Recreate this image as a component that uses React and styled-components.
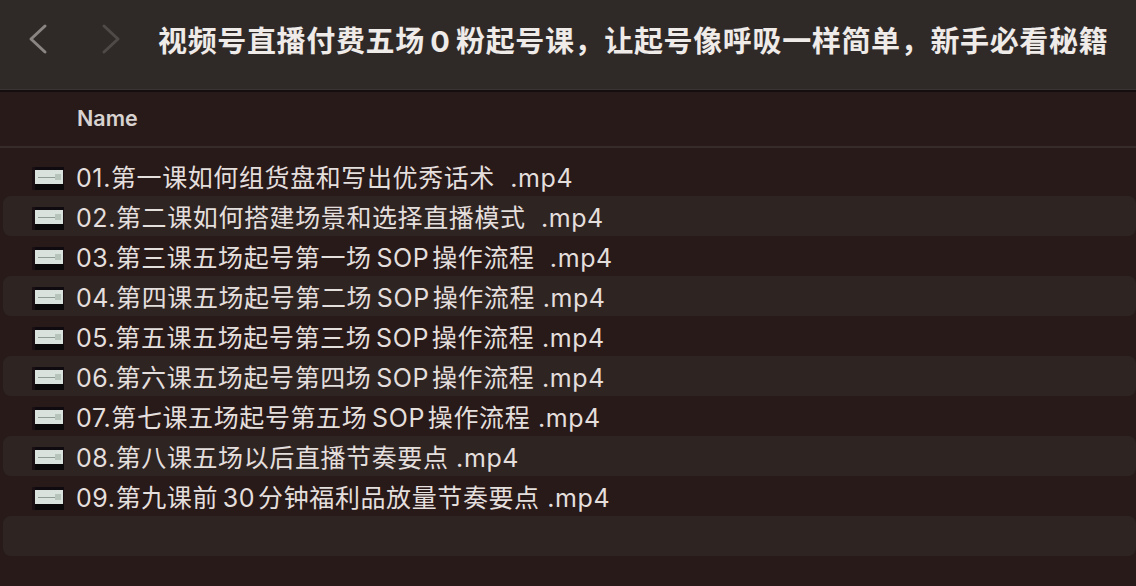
import React from 'react'
import styled, { createGlobalStyle } from 'styled-components'

const GlobalStyle = createGlobalStyle`
  html, body {
    margin: 0;
    padding: 0;
    background: #271a19;
    overflow: hidden;
  }
`

const Window = styled.div`
  width: 1136px;
  height: 586px;
  display: flex;
  flex-direction: column;
  background: #271a19;
  font-family: Inter, "Noto Sans CJK SC", sans-serif;
  overflow: hidden;
`

const Toolbar = styled.div`
  height: 90px;
  flex: none;
  box-sizing: border-box;
  display: flex;
  align-items: center;
  padding: 0 0 12px 28px;
  background: #2f2a28;
  border-bottom: 1px solid #3a3432;
  box-shadow: 0 1px 0 #140f0e, 0 2px 0 #140f0e;
  white-space: nowrap;
`

const NavButton = styled.svg`
  width: 20px;
  height: 32px;
  flex: none;
  margin-right: ${(p) => p.$gap}px;
  fill: none;
  stroke: ${(p) => p.$color};
  stroke-width: 3;
  stroke-linecap: round;
  stroke-linejoin: round;
`

const Title = styled.div`
  font-size: 29px;
  font-weight: 700;
  color: #efebe9;
  letter-spacing: 0.65px;
`

const HeaderRow = styled.div`
  height: 56px;
  flex: none;
  display: flex;
  align-items: center;
  padding: 0 0 2px 77px;
  box-sizing: border-box;
  margin-top: 2px;
  border-bottom: 2px solid #382c2a;
  font-size: 21.5px;
  font-weight: 600;
  color: #d8d2d0;
`

const List = styled.div`
  display: flex;
  flex-direction: column;
  padding-top: 8px;
`

const Row = styled.div`
  height: 40px;
  display: flex;
  align-items: center;
  margin-left: 3px;
  padding-left: 29px;
  box-sizing: border-box;
  border-radius: 8px;
  background: ${(p) => (p.$striped ? '#2e2523' : 'transparent')};
`

const FileName = styled.span`
  margin-left: 12px;
  font-size: 25px;
  letter-spacing: 0.6px;
  color: #e4dfdd;
  white-space: pre;
`

const Thumb = styled.svg`
  width: 32px;
  height: 23px;
  flex: none;
  margin-top: 4px;
`

const VideoIcon = () => (
  <Thumb viewBox="0 0 32 23">
    <rect width="32" height="23" fill="#1a1013" />
    <rect x="3" y="0" width="29" height="3" fill="#0e0a10" />
    <rect x="3" y="17" width="29" height="6" fill="#0b0809" />
    <rect x="3" y="3" width="28" height="14" fill="#d9e2dc" />
    <rect x="6" y="10" width="20" height="1" fill="#8f9c95" />
    <rect x="23" y="7" width="6" height="6" fill="#b6c4bc" />
  </Thumb>
)

const files = [
  '01.第一课如何组货盘和写出优秀话术  .mp4',
  '02.第二课如何搭建场景和选择直播模式  .mp4',
  '03.第三课五场起号第一场\u2006SOP\u200a操作流程  .mp4',
  '04.第四课五场起号第二场\u2006SOP\u200a操作流程 .mp4',
  '05.第五课五场起号第三场\u2006SOP\u200a操作流程 .mp4',
  '06.第六课五场起号第四场\u2006SOP\u200a操作流程 .mp4',
  '07.第七课五场起号第五场\u2006SOP\u200a操作流程 .mp4',
  '08.第八课五场以后直播节奏要点 .mp4',
  '09.第九课前\u200630\u200a分钟福利品放量节奏要点 .mp4',
  '',
]

const App = () => {
  return (
    <Window>
      <GlobalStyle />
      <Toolbar>
        <NavButton $gap={53} $color="#8a8583" viewBox="0 0 20 32">
          <path d="M17 3 L3 16 L17 29" />
        </NavButton>
        <NavButton $gap={37} $color="#4f4a48" viewBox="0 0 20 32">
          <path d="M3 3 L17 16 L3 29" />
        </NavButton>
        <Title>视频号直播付费五场&#8198;0&#8198;粉起号课，让起号像呼吸一样简单，新手必看秘籍</Title>
      </Toolbar>
      <HeaderRow>Name</HeaderRow>
      <List>
        {files.map((name, i) => (
          <Row key={i} $striped={i % 2 === 1}>
            {name && <VideoIcon />}
            {name && <FileName>{name}</FileName>}
          </Row>
        ))}
      </List>
    </Window>
  )
}

export default App
